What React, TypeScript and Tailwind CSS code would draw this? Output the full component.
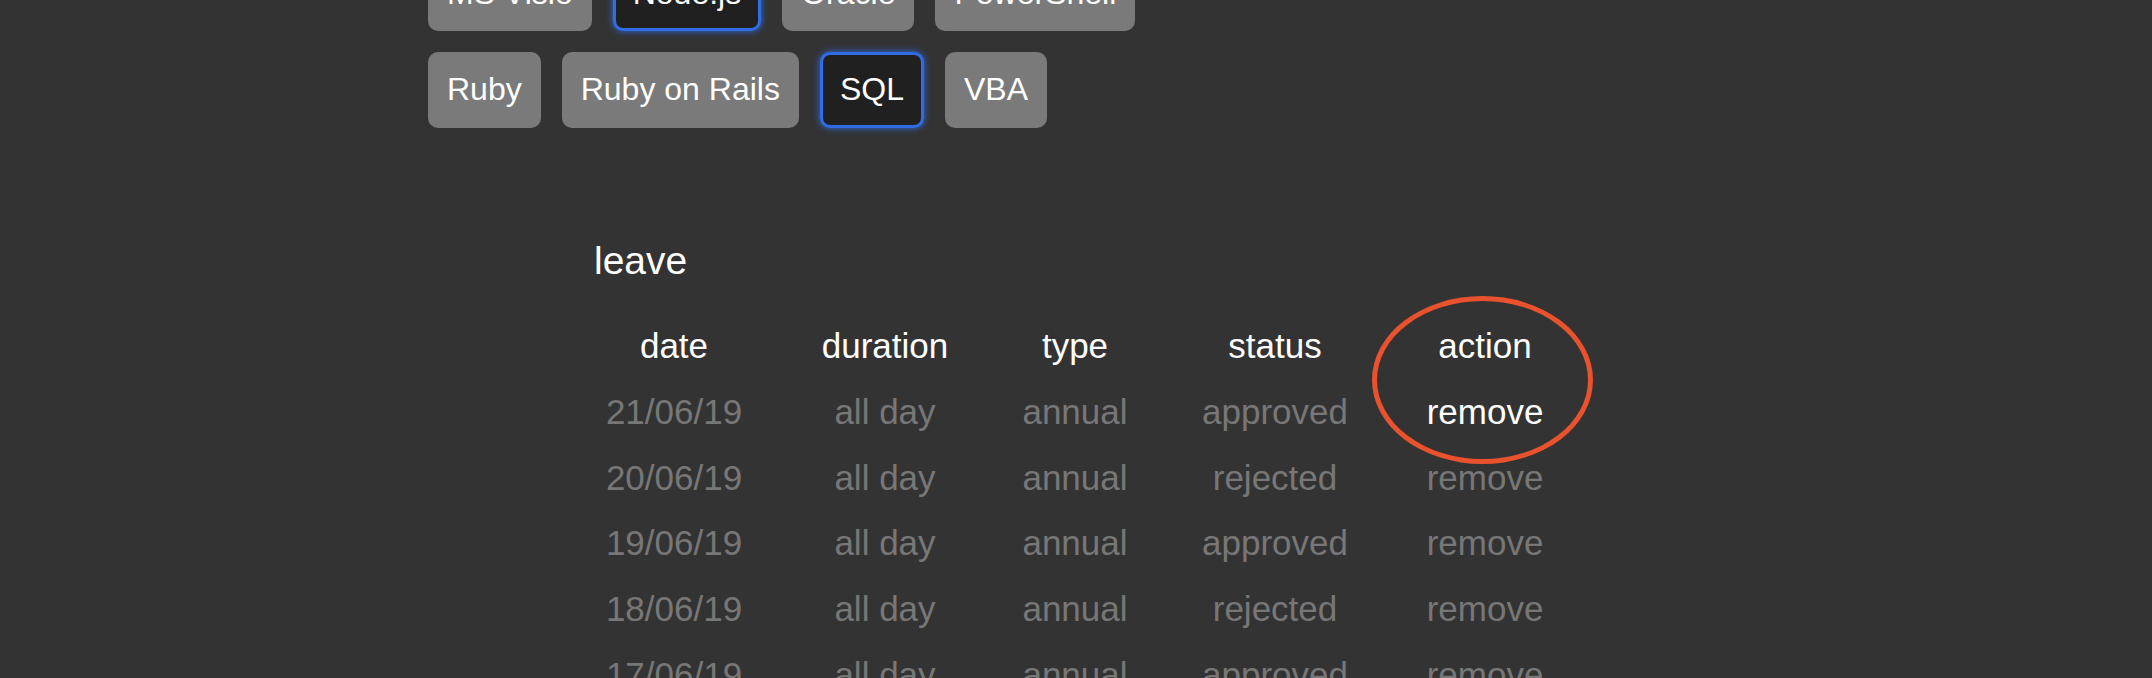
const skillRows = [
  ['MS Visio', 'Node.js', 'Oracle', 'PowerShell'],
  ['Ruby', 'Ruby on Rails', 'SQL', 'VBA'],
];

const selected = ['Node.js', 'SQL'];

const leave = [
  { date: '21/06/19', duration: 'all day', type: 'annual', status: 'approved' },
  { date: '20/06/19', duration: 'all day', type: 'annual', status: 'rejected' },
  { date: '19/06/19', duration: 'all day', type: 'annual', status: 'approved' },
  { date: '18/06/19', duration: 'all day', type: 'annual', status: 'rejected' },
  { date: '17/06/19', duration: 'all day', type: 'annual', status: 'approved' },
  { date: '16/06/19', duration: 'all day', type: 'annual', status: 'rejected' },
];

const headers = ['date', 'duration', 'type', 'status', 'action'];

const SkillButton = ({ label }: { label: string }) => {
  const active = selected.includes(label);
  return (
    <button
      className={
        active
          ? 'rounded-[10px] border-[3px] border-[#2f6ce5] bg-[#202020] px-[17px] py-[16.5px] text-[32px] leading-[36.8px] text-white shadow-[0_0_7px_#2f6ce5]'
          : 'rounded-[10px] border-[3px] border-transparent bg-[#7a7a7a] px-[16px] py-[16.5px] text-[32px] leading-[36.8px] text-white'
      }
    >
      {label}
    </button>
  );
};

const App = () => {
  return (
    <div className="min-h-screen overflow-hidden bg-[#333333] font-['Liberation_Sans',Arial,sans-serif]">
      <div className="-mt-[45px] flex flex-col gap-[21px] pl-[428px]">
        {skillRows.map((row, i) => (
          <div key={i} className="flex gap-[21px]">
            {row.map((s) => (
              <SkillButton key={s} label={s} />
            ))}
          </div>
        ))}
      </div>

      <div className="ml-[565px] mt-[111px] w-[1018px]">
        <h2 className="pl-[29px] text-[39px] leading-[44.8px] text-white">leave</h2>

        <div className="relative mt-[30px] grid grid-cols-[218px_204px_176px_224px_196px] text-[35px] leading-[40px]">
          {headers.map((h) => (
            <div key={h} className="flex h-[65.7px] items-center justify-center text-white">
              {h}
            </div>
          ))}

          {leave.map((row, i) => (
            <div key={row.date} className="contents text-[#777777]">
              <div className="flex h-[65.7px] items-center justify-center">{row.date}</div>
              <div className="flex h-[65.7px] items-center justify-center">{row.duration}</div>
              <div className="flex h-[65.7px] items-center justify-center">{row.type}</div>
              <div className="flex h-[65.7px] items-center justify-center">{row.status}</div>
              <div className={i === 0 ? 'flex h-[65.7px] items-center justify-center text-white' : 'flex h-[65.7px] items-center justify-center'}>
                remove
              </div>
            </div>
          ))}

          {/* highlight ring */}
          <div className="absolute left-[807px] top-[-17px] h-[168px] w-[221px] rounded-[50%] border-[5px] border-[#e9522c]" />
        </div>
      </div>
    </div>
  );
};

export default App;
